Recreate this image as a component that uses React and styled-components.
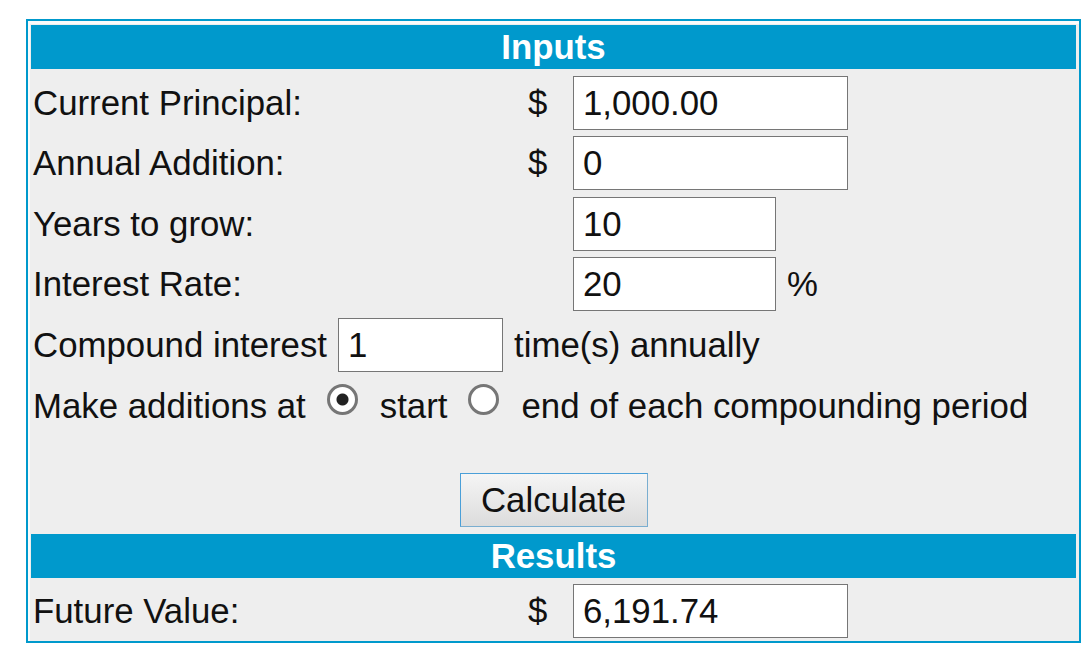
import React from 'react';
import styled, {createGlobalStyle} from 'styled-components';

const GlobalStyle = createGlobalStyle`
    body {
        margin: 0;
        background: #fff;
        font-family: "Liberation Sans", Arial, sans-serif;
    }
`;

const Panel = styled.form`
    box-sizing: border-box;
    width: 1055px;
    margin: 19px 0 0 26px;
    padding: 4px 3px 3px;
    border: 2px solid #0099cc;
    background: #eeeeee;
    box-shadow: inset 2px 3px 0 #fbfbfb;
    display: flex;
    flex-direction: column;
    gap: 6.5px;
    font-size: 34.8px;
    color: #111;
`;

const SectionTitle = styled.div`
    height: 44px;
    line-height: 44px;
    background: #0099cc;
    color: #fff;
    font-weight: bold;
    text-align: center;
`;

const FieldRow = styled.div`
    display: grid;
    grid-template-columns: 495px 45px 1fr;
    align-items: center;
    height: 54px;
    padding-left: 2px;
`;

const FieldCell = styled.div`
    display: flex;
    align-items: center;
    gap: 11px;
`;

const InlineRow = styled.div`
    display: flex;
    align-items: center;
    gap: 11px;
    height: 54px;
    padding-left: 2px;
`;

const TextField = styled.input`
    box-sizing: border-box;
    width: ${(p) => p.$w}px;
    height: 54px;
    margin: 0;
    padding: 0 9px;
    border: 1px solid #767676;
    border-radius: 0;
    background: #fff;
    color: #111;
    font: inherit;
    outline: none;
`;

const RadioRow = styled.div`
    box-sizing: border-box;
    display: flex;
    align-items: center;
    height: 54px;
    padding: 2px 0 0 2px;
`;

const Radio = styled.input`
    appearance: none;
    box-sizing: border-box;
    width: 31px;
    height: 31px;
    margin: 0 22px 14px 21px;
    border: 3px solid #767676;
    border-radius: 50%;
    background: #fff;

    &:checked {
        background: radial-gradient(circle, #222 0 5.5px, #fff 6.5px);
    }
`;

const ButtonRow = styled.div`
    display: flex;
    justify-content: center;
    margin-top: 34.5px;
`;

const Button = styled.button`
    box-sizing: border-box;
    width: 188px;
    height: 54px;
    padding: 0;
    border: 1px solid #4a9fd8;
    border-right-color: #7aaed0;
    border-bottom-color: #7aaed0;
    border-radius: 0;
    background: linear-gradient(#f5f5f5, #dcdcdc);
    color: #111;
    font: inherit;
`;

const fields = [
    {label: 'Current Principal:', prefix: '$', value: '1,000.00', width: 275},
    {label: 'Annual Addition:', prefix: '$', value: '0', width: 275},
    {label: 'Years to grow:', value: '10', width: 203},
    {label: 'Interest Rate:', value: '20', width: 203, suffix: '%'},
];

export default function App() {
    return (
        <>
            <GlobalStyle />
            <Panel onSubmit={(e) => e.preventDefault()}>
                <SectionTitle>Inputs</SectionTitle>
                {fields.map((f) => (
                    <FieldRow key={f.label}>
                        <span>{f.label}</span>
                        <span>{f.prefix}</span>
                        <FieldCell>
                            <TextField $w={f.width} defaultValue={f.value} />
                            {f.suffix && <span>{f.suffix}</span>}
                        </FieldCell>
                    </FieldRow>
                ))}
                <InlineRow>
                    <span>Compound interest</span>
                    <TextField $w={165} defaultValue="1" />
                    <span>time(s) annually</span>
                </InlineRow>
                <RadioRow>
                    <span>Make additions at</span>
                    <Radio type="radio" name="when" defaultChecked />
                    <span>start</span>
                    <Radio type="radio" name="when" />
                    <span>end of each compounding period</span>
                </RadioRow>
                <ButtonRow>
                    <Button type="submit">Calculate</Button>
                </ButtonRow>
                <SectionTitle>Results</SectionTitle>
                <FieldRow>
                    <span>Future Value:</span>
                    <span>$</span>
                    <FieldCell>
                        <TextField $w={275} defaultValue="6,191.74" readOnly />
                    </FieldCell>
                </FieldRow>
            </Panel>
        </>
    );
}
